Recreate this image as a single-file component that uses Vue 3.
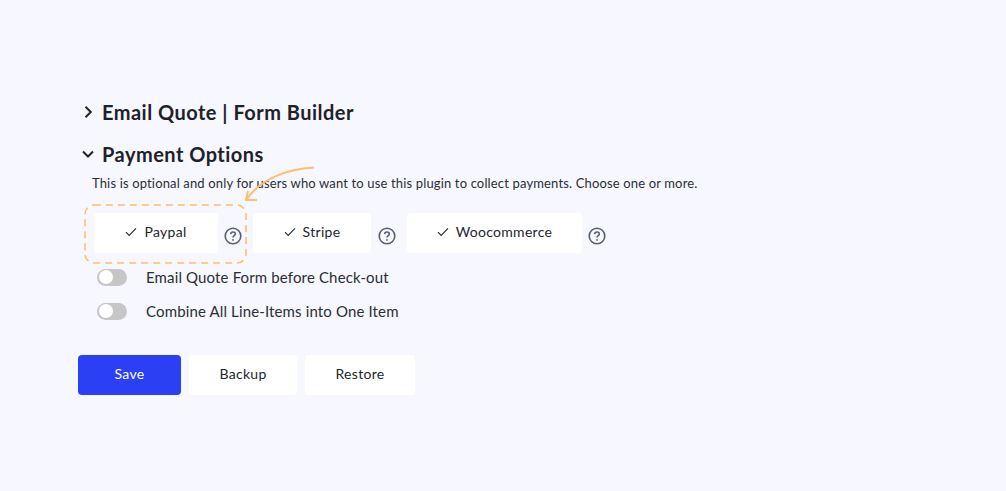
<template>
  <div class="page">
    <div class="section-head closed">
      <svg class="chev" width="16" height="16" viewBox="0 0 16 16"><path d="M5.5 2.8 L10.8 8 L5.5 13.2" /></svg>
      <h2>Email Quote | Form Builder</h2>
    </div>

    <div class="section-head open">
      <svg class="chev" width="16" height="16" viewBox="0 0 16 16"><path d="M3 5.5 L8 10.5 L13 5.5" /></svg>
      <h2>Payment Options</h2>
    </div>
    <p class="intro">This is optional and only for users who want to use this plugin to collect payments. Choose one or more.</p>

    <div class="options">
      <template v-for="opt in options" :key="opt.name">
        <div class="option" :style="{ width: opt.width + 'px' }">
          <svg class="check" width="12" height="10" viewBox="0 0 12 10"><path d="M1 5.2 L4.2 8.4 L11 1.4" /></svg>
          <span>{{ opt.name }}</span>
        </div>
        <svg class="help" :class="{ wide: opt.name === 'Stripe' }" width="18" height="18" viewBox="0 0 18 18">
          <circle cx="9" cy="9" r="7.8" />
          <path d="M6.7 7.1 C6.8 5.7 7.8 5 9 5 C10.3 5 11.3 5.8 11.3 7 C11.3 8.6 9 8.7 9 10.4" />
          <circle class="dot" cx="9" cy="12.9" r="0.95" />
        </svg>
      </template>

      <svg class="highlight" width="164" height="61" viewBox="0 0 164 61">
        <rect x="1" y="1" width="161" height="58" rx="9" />
      </svg>
      <svg class="arrow" width="72" height="38" viewBox="0 0 72 38">
        <path d="M70 1.5 C44 3 17 12 2 34" />
        <path d="M4 25 L2 34 L13 34" />
      </svg>
    </div>

    <div class="switch-row" v-for="label in switches" :key="label">
      <span class="switch"><span class="knob"></span></span>
      <span class="switch-label">{{ label }}</span>
    </div>

    <div class="actions">
      <button class="btn primary">Save</button>
      <button class="btn backup">Backup</button>
      <button class="btn restore">Restore</button>
    </div>
  </div>
</template>

<script setup>
const options = [
  { name: "Paypal", width: 124 },
  { name: "Stripe", width: 118 },
  { name: "Woocommerce", width: 175 }
];

const switches = [
  "Email Quote Form before Check-out",
  "Combine All Line-Items into One Item"
];
</script>

<style>
html,
body {
  margin: 0;
  background: #f7f8ff;
}
</style>

<style scoped>
.page {
  box-sizing: border-box;
  width: 1006px;
  height: 491px;
  padding: 98px 0 0 78px;
  background: #f7f8ff;
  font-family: "Lato", "Open Sans", sans-serif;
  color: #23252d;
  overflow: hidden;
}

.section-head {
  display: flex;
  align-items: center;
  height: 28px;
  padding-left: 2px;
  gap: 6px;
}

.section-head.open {
  margin-top: 14px;
}

.section-head h2 {
  margin: 0;
  font-size: 20px;
  line-height: 28px;
  font-weight: 700;
  letter-spacing: 0.48px;
  color: #1f2128;
}

.chev path {
  fill: none;
  stroke: #1f2128;
  stroke-width: 2;
}

.intro {
  margin: 6px 0 0 14px;
  font-size: 13px;
  line-height: 18px;
  letter-spacing: 0.15px;
  color: #2b2d35;
}

.options {
  position: relative;
  display: flex;
  align-items: flex-start;
  margin: 21px 0 0 16px;
  height: 40px;
}

.option {
  box-sizing: border-box;
  height: 40px;
  display: flex;
  align-items: center;
  justify-content: center;
  gap: 7px;
  padding-bottom: 3px;
  background: #fff;
  border-radius: 4px;
  font-size: 14px;
  letter-spacing: 0.3px;
}

.check path {
  fill: none;
  stroke: #2b2d35;
  stroke-width: 1.2;
}

.help {
  margin: 14px 11px 0 6px;
  flex: none;
}

.help.wide {
  margin-left: 7px;
}

.help circle,
.help path {
  fill: none;
  stroke: #5a5c74;
  stroke-width: 1.6;
}

.help .dot {
  fill: #5a5c74;
  stroke: none;
}

/* tutorial callout over the first option */
.highlight {
  position: absolute;
  left: -10px;
  top: -9px;
  pointer-events: none;
}

.highlight rect {
  fill: none;
  stroke: #ffbd6e;
  stroke-width: 1.6;
  stroke-dasharray: 7 5;
}

.arrow {
  position: absolute;
  left: 150px;
  top: -47px;
  pointer-events: none;
}

.arrow path {
  fill: none;
  stroke: #ffbd6e;
  stroke-width: 2;
}

.switch-row {
  display: flex;
  align-items: center;
  height: 34px;
  padding-left: 19px;
}

.options + .switch-row {
  margin-top: 7px;
}

.switch {
  position: relative;
  width: 30px;
  height: 17px;
  border-radius: 9px;
  background: #c6c6c6;
  flex: none;
}

.knob {
  position: absolute;
  left: 1.5px;
  top: 1.5px;
  width: 14px;
  height: 14px;
  border-radius: 50%;
  background: #fff;
}

.switch-label {
  margin-left: 19px;
  padding-bottom: 1px;
  font-size: 15px;
  letter-spacing: 0.14px;
  color: #2b2d35;
}

.actions {
  display: flex;
  gap: 8px;
  margin-top: 27px;
}

.btn {
  height: 40px;
  padding-bottom: 4px;
  border: none;
  border-radius: 4px;
  background: #fff;
  font-family: inherit;
  font-size: 14px;
  letter-spacing: 0.3px;
  color: #23252d;
}

.btn.primary {
  width: 103px;
  background: #2b40f5;
  color: #fff;
}

.btn.backup {
  width: 108px;
}

.btn.restore {
  width: 110px;
}
</style>
